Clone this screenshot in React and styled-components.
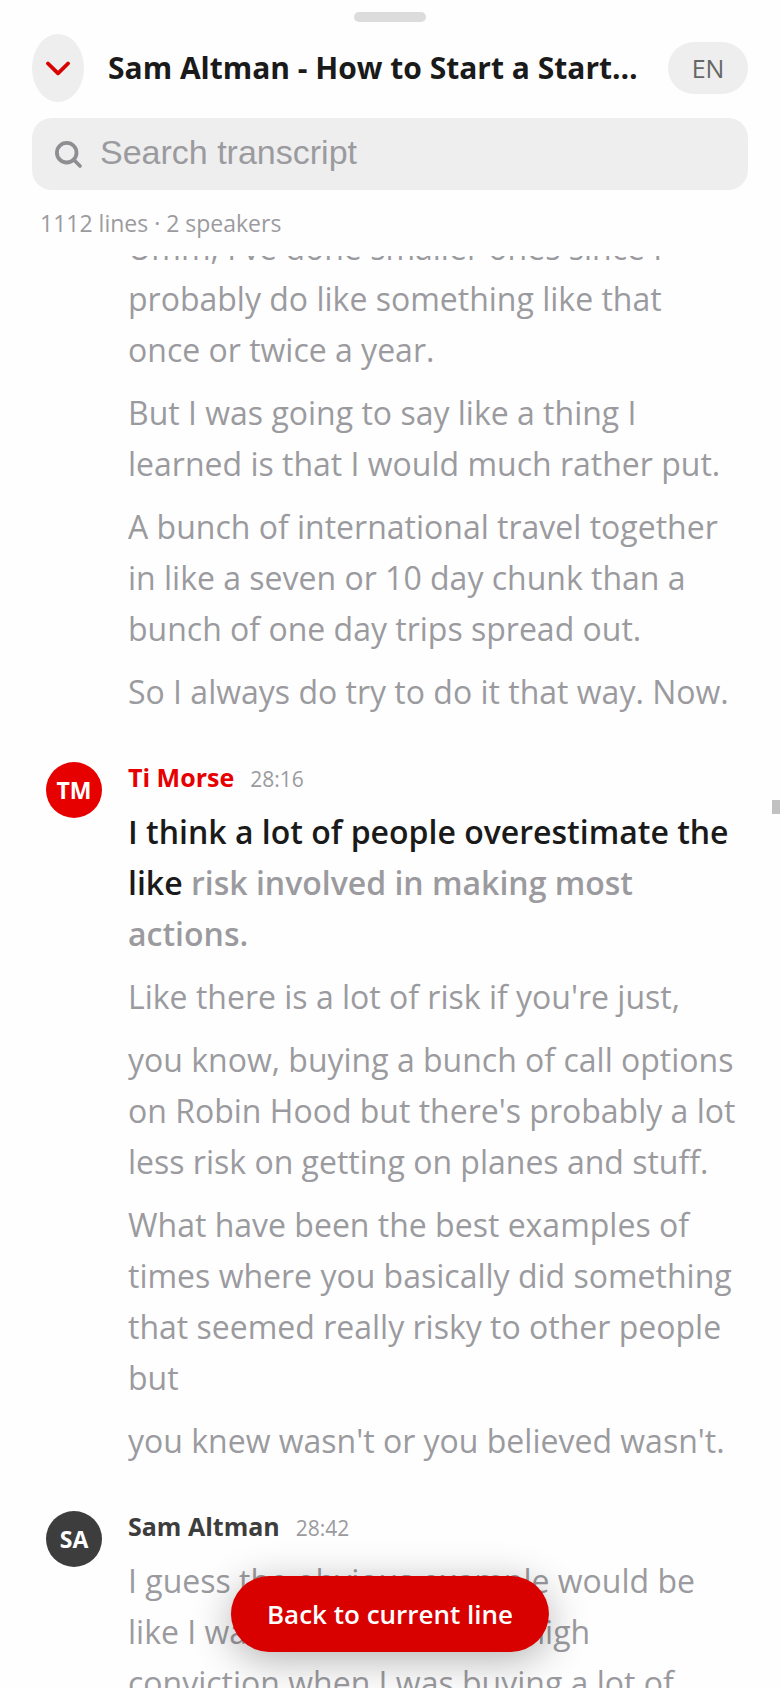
import React, { useEffect, useLayoutEffect, useRef, useState } from 'react';
import styled, { createGlobalStyle } from 'styled-components';

const speakers = {
    ti: { name: "Ti Morse", initials: "TM", color: "#e60000" },
    sam: { name: "Sam Altman", initials: "SA", color: "#3d3d3d" },
};

const transcript = [
    {
        id: 1,
        lines: [
            "Umm, I've done smaller ones since I probably do like something like that once or twice a year.",
            "But I was going to say like a thing I learned is that I would much rather put.",
            "A bunch of international travel together in like a seven or 10 day chunk than a bunch of one day trips spread out.",
            "So I always do try to do it that way. Now.",
        ],
    },
    {
        id: 2,
        speaker: "ti",
        time: "28:16",
        lines: [
            { spoken: "I think a lot of people overestimate the like", rest: "risk involved in making most actions." },
            "Like there is a lot of risk if you're just,",
            "you know, buying a bunch of call options on Robin Hood but there's probably a lot less risk on getting on planes and stuff.",
            "What have been the best examples of times where you basically did something that seemed really risky to other people but",
            "you knew wasn't or you believed wasn't.",
        ],
    },
    {
        id: 3,
        speaker: "sam",
        time: "28:42",
        lines: [
            "I guess the obvious example would be like I was really, extremely high conviction when I was buying a lot of",
        ],
    },
];

// how far the list is scrolled when the sheet opens
const START_SCROLL = 34;

function Line({ line }) {
    if (typeof line === "string") return <Text>{line}</Text>;
    return (
        <Text $current>
            <mark>{line.spoken}</mark> {line.rest}
        </Text>
    );
}

function Group({ group }) {
    const speaker = speakers[group.speaker];
    return (
        <GroupRow>
            <Side>
                {speaker && <Avatar $color={speaker.color}>{speaker.initials}</Avatar>}
            </Side>
            <div>
                {speaker && (
                    <Meta>
                        <Name $color={speaker.color}>{speaker.name}</Name>
                        <Time>{group.time}</Time>
                    </Meta>
                )}
                {group.lines.map((line, i) => <Line key={i} line={line}/>)}
            </div>
        </GroupRow>
    );
}

export default function App() {
    const [query, setQuery] = useState("");
    const listRef = useRef(null);

    const scrollToCurrent = () => {
        if(listRef.current) listRef.current.scrollTop = START_SCROLL;
    }

    useLayoutEffect(scrollToCurrent, []);
    useEffect(() => {
        document.fonts.ready.then(scrollToCurrent);
    }, []);

    return (
        <Sheet>
            <GlobalStyle/>
            <Handle/>
            <Header>
                <CollapseButton type="button" aria-label="Close transcript">
                    <svg width="24" height="16" viewBox="0 0 24 16" fill="none">
                        <path d="M2 3.5 L12 13.3 L22 3.5" stroke="currentColor" strokeWidth="3.8" strokeLinecap="round" strokeLinejoin="round"/>
                    </svg>
                </CollapseButton>
                <Title>Sam Altman - How to Start a Startup</Title>
                <LangButton type="button">EN</LangButton>
            </Header>
            <SearchBox>
                <svg width="28" height="28" viewBox="0 0 28 28" fill="none" aria-hidden="true">
                    <circle cx="11.7" cy="12.7" r="9.8" stroke="currentColor" strokeWidth="3.8"/>
                    <path d="M18.8 19.8 L25 26" stroke="currentColor" strokeWidth="3.6" strokeLinecap="round"/>
                </svg>
                <input
                    type="text"
                    aria-label="Search transcript"
                    placeholder="Search transcript"
                    value={query}
                    onChange={(e) => setQuery(e.target.value)}
                />
            </SearchBox>
            <Summary>1112 lines · 2 speakers</Summary>
            <ListArea>
                <List ref={listRef}>
                    {transcript.map((group) => <Group key={group.id} group={group}/>)}
                </List>
                <Thumb/>
                <BackButton type="button" onClick={scrollToCurrent}>Back to current line</BackButton>
            </ListArea>
        </Sheet>
    );
}

const GlobalStyle = createGlobalStyle`
  * {
    box-sizing: border-box;
  }
  body {
    margin: 0;
    background: #fefefe;
    font-family: "Segoe UI", "Open Sans", "Noto Sans", sans-serif;
  }
  button {
    border: none;
    padding: 0;
    font-family: inherit;
    cursor: pointer;
  }
`;

const Sheet = styled.main`
  display: flex;
  flex-direction: column;
  height: 100vh;
  padding-top: 12px;
  overflow: hidden;
`;

const Handle = styled.div`
  flex: none;
  align-self: center;
  width: 72px;
  height: 10px;
  border-radius: 5px;
  background: #dcdcdc;
`;

const Header = styled.header`
  display: flex;
  align-items: center;
  gap: 24px;
  padding: 12px 32px 16px;
`;

const CollapseButton = styled.button`
  display: flex;
  align-items: center;
  justify-content: center;
  flex: none;
  width: 52px;
  height: 68px;
  border-radius: 50%;
  background: #eeeeee;
  color: #d90000;
`;

const Title = styled.h1`
  flex: 1;
  min-width: 0;
  margin: 0;
  font-size: 30px;
  line-height: 46px;
  font-weight: 700;
  color: #1a1a1a;
  white-space: nowrap;
  overflow: hidden;
  text-overflow: ellipsis;
`;

const LangButton = styled.button`
  flex: none;
  width: 80px;
  height: 52px;
  border-radius: 26px;
  background: #eeeeee;
  color: #666666;
  font-size: 25px;
  font-weight: 500;
`;

const SearchBox = styled.label`
  display: flex;
  align-items: center;
  gap: 17px;
  flex: none;
  height: 72px;
  margin: 0 32px;
  padding: 0 23px;
  border-radius: 20px;
  background: #eeeeee;
  color: #8e8e92;
  input {
    flex: 1;
    min-width: 0;
    border: none;
    outline: none;
    padding: 0 0 4px;
    background: transparent;
    color: #1a1a1a;
    font-family: "Liberation Sans", Arial, sans-serif;
    font-size: 34px;
  }
  input::placeholder {
    color: #9b9b9f;
    opacity: 1;
  }
`;

const Summary = styled.p`
  margin: 0;
  padding: 16px 40px;
  font-size: 23px;
  line-height: 34px;
  color: #9b9b9f;
`;

const ListArea = styled.div`
  position: relative;
  flex: 1;
  min-height: 0;
`;

const List = styled.div`
  height: 100%;
  padding-bottom: 160px;
  overflow-y: auto;
  scrollbar-width: none;
`;

const GroupRow = styled.section`
  display: flex;
  padding: 0 40px 33px 46px;
`;

const Side = styled.div`
  flex: none;
  width: 82px;
`;

const Avatar = styled.div`
  display: flex;
  align-items: center;
  justify-content: center;
  width: 56px;
  height: 56px;
  border-radius: 50%;
  background: ${(p) => p.$color};
  color: #fff;
  font-size: 23px;
  font-weight: 700;
`;

const Meta = styled.div`
  display: flex;
  align-items: baseline;
  gap: 16px;
  line-height: 30px;
  margin-bottom: 12px;
`;

const Name = styled.span`
  font-size: 25px;
  font-weight: 700;
  color: ${(p) => p.$color};
`;

const Time = styled.span`
  font-size: 21px;
  color: #9b9b9f;
`;

const Text = styled.p`
  margin: 0 0 12px;
  font-size: 32px;
  line-height: 51px;
  font-weight: ${(p) => (p.$current ? 600 : 400)};
  color: #9b9b9f;
  mark {
    background: none;
    color: #1a1a1a;
  }
`;

const Thumb = styled.div`
  position: absolute;
  top: 38%;
  right: 0;
  width: 8px;
  height: 14px;
  background: #c1c1c1;
`;

const BackButton = styled.button`
  position: absolute;
  bottom: 36px;
  left: 50%;
  transform: translateX(-50%);
  height: 76px;
  padding: 0 36px;
  border-radius: 38px;
  background: #d90000;
  color: #fff;
  font-size: 26px;
  font-weight: 600;
  white-space: nowrap;
  box-shadow: 0 8px 40px rgba(0, 0, 0, 0.3);
`;
